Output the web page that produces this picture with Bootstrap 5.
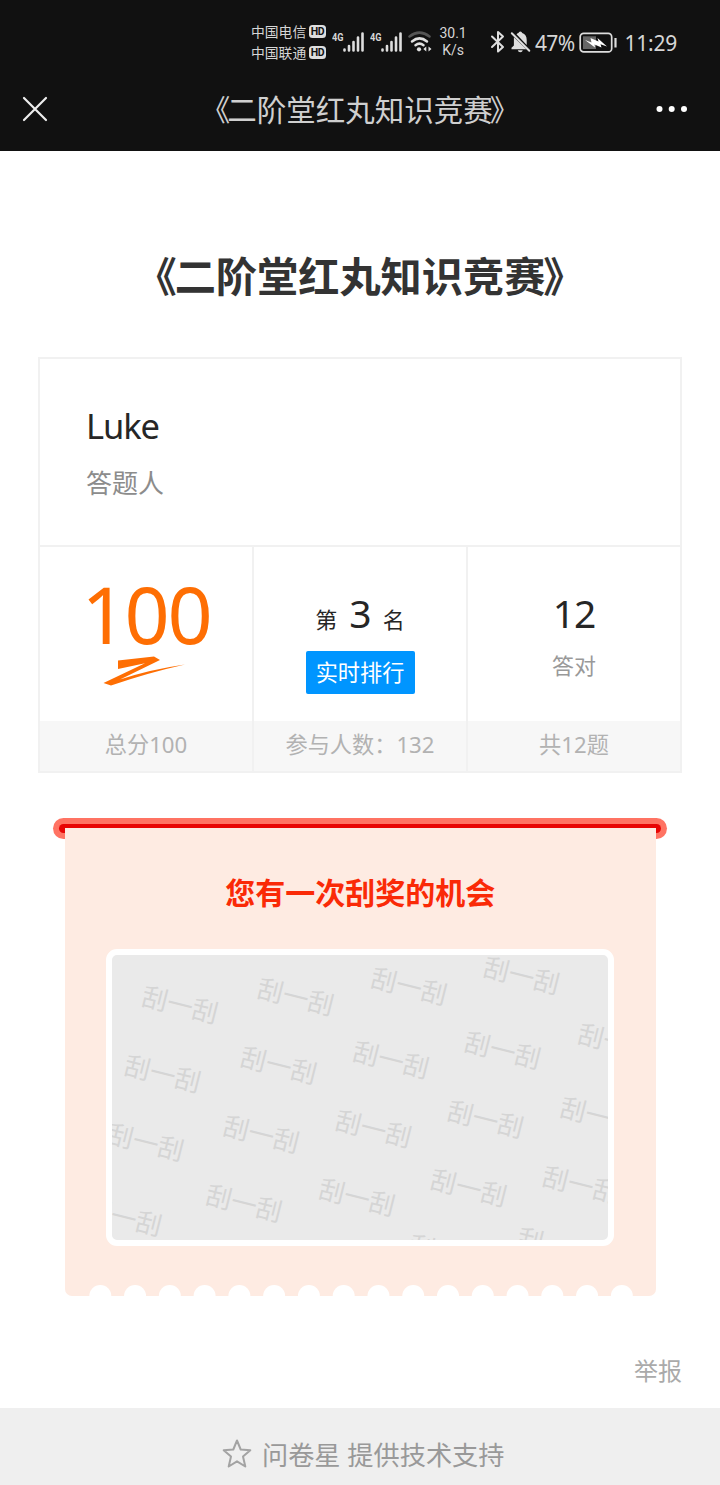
<!DOCTYPE html>
<html lang="zh-CN">
<head>
<meta charset="utf-8">
<meta name="viewport" content="width=device-width, initial-scale=1">
<title>《二阶堂红丸知识竞赛》</title>
<link href="https://cdn.jsdelivr.net/npm/bootstrap@5.3.0/dist/css/bootstrap.min.css" rel="stylesheet">
<style>
body { font-family: "Noto Sans", "Noto Sans CJK SC", sans-serif; color: #262626; min-height: 1485px; background: #fff; overflow-x: hidden; }
.topbar { background: #111; height: 150.5px; color: #d6d6d6; }
.status { height: 68px; padding: 0 43px 0 251px; }
.status svg, .nav-row svg { display: block; flex: none; }
.carrier { width: 76px; font-size: 13.8px; line-height: 21px; margin-top: 21px; }
.hd { width: 17.5px; height: 12.500px; border-radius: 3.5px; background: #dedede; color: #111; font: 700 10.5px/13px Roboto, sans-serif; text-align: center; letter-spacing: -.3px; }
.sig { margin: 28px 0 0 6px; }
.rate { width: 32px; margin: 25px 0 0 3px; font: 14px/17px Roboto, sans-serif; text-align: center; }
.pct { width: 40px; font-size: 21px; line-height: 28px; margin: 29px 0 0 4px; letter-spacing: -.6px; }
.clock { font-size: 21px; line-height: 28px; margin: 29px 0 0 7px; letter-spacing: -.25px; }
.nav-row { height: 82px; padding: 0 32px 0 21px; }
.nav-title { font-size: 29.5px; line-height: 40px; margin: 2px 0 0 15px; color: #cfcfcf; white-space: nowrap; }
.nav-title span { margin: 0 -3px; }
.quiz-title { font-size: 41.2px; line-height: 60px; font-weight: 700; color: #333; margin: 95.5px 0 51px; white-space: nowrap; }
.quiz-title span { margin: 0 -2px; }
.result { margin: 0 38px; border: 2px solid #f1f1f1; height: 416px; }
.person { height: 188px; padding: 45px 46px 0 46px; border-bottom: 2px solid #f1f1f1; }
.person-name { font-size: 34.5px; line-height: 44px; letter-spacing: -1.1px; }
.person-role { font-size: 26px; line-height: 36px; margin-top: 16.5px; color: #8c8c8c; }
.score-col { height: 224px; }
.score-col + .score-col { border-left: 2px solid #f1f1f1; }
.score-main { height: 174px; }
.score-foot { height: 50px; background: #f7f7f7; color: #b2b2b2; font-size: 22.2px; line-height: 47px; white-space: nowrap; }
.total { font-size: 79px; line-height: 90px; color: #fe6e03; letter-spacing: -2.2px; margin-top: 22px; }
.rank { font-size: 22px; line-height: 52px; margin-top: 39.5px; }
.big-num { font-size: 39px; line-height: 52px; letter-spacing: -1px; }
.rank-btn { --bs-btn-border-radius: 2px; background: #0095ff; color: #fff; font-size: 22.2px; width: 109px; height: 43px; padding: 0; line-height: 41px; border: 0; margin-top: 6px; }
.rank-btn:hover { background: #0085e6; color: #fff; }
.muted { color: #999; font-size: 22px; line-height: 32px; }
.prize { margin: 45px 53px 0; height: 479px; }
.slot { height: 20.5px; border-radius: 10.5px; background: #ff7363; padding: 6px; }
.slot > div { height: 8.5px; background: #e80504; border-radius: 4.5px; }
.ticket { width: 590.5px; height: 468.5px; margin: -11px 0 0 12px; background: #feebe2; border-radius: 0 0 7px 7px; position: relative; overflow: hidden; }
.ticket-title { font-size: 30px; line-height: 44px; font-weight: 700; color: #fa2a07; padding-top: 43px; }
.scratch { width: 508px; height: 297px; margin: 34px 0 0 41px; border: 6px solid #fff; border-radius: 11px; background: #eaeaea; overflow: hidden; }
.scratch text { font: 25.8px "Noto Sans CJK SC", sans-serif; fill: #d5d5d5; text-anchor: middle; }
.teeth { position: absolute; left: 0; bottom: 0; }
.report { color: #aaa; font-size: 24px; line-height: 36px; padding-right: 38px; margin-top: 56px; }
.foot { background: #efefef; height: 77px; margin-top: 19px; color: #999; font-size: 26.2px; line-height: 36px; padding: 29px 0 0 222px; }
.foot span { margin-left: 10px; white-space: nowrap; }
</style>
</head>
<body class="d-flex flex-column">
<header class="topbar">
  <div class="status d-flex align-items-start text-nowrap">
    <div class="carrier">
      <div class="d-flex align-items-center justify-content-between"><span>中国电信</span><span class="hd">HD</span></div>
      <div class="d-flex align-items-center justify-content-between"><span>中国联通</span><span class="hd">HD</span></div>
    </div>
    <svg class="sig" width="32" height="26" viewBox="0 0 32 26"><text x="0" y="13" font-family="Roboto" font-weight="700" font-size="11.5" textLength="11.5" lengthAdjust="spacingAndGlyphs" fill="#d6d6d6">4G</text><g stroke="#dedede" stroke-width="2.6" stroke-linecap="round"><path d="M12.5 21.5v1M17 18v4.5M21.5 14v8.500M26 9.500v13M30.500 5.500v17"/></g></svg>
    <svg class="sig" width="32" height="26" viewBox="0 0 32 26"><text x="0" y="13" font-family="Roboto" font-weight="700" font-size="11.5" textLength="11.5" lengthAdjust="spacingAndGlyphs" fill="#d6d6d6">4G</text><g stroke="#dedede" stroke-width="2.6" stroke-linecap="round"><path d="M12.5 21.5v1M17 18v4.5M21.5 14v8.500M26 9.500v13M30.500 5.500v17"/></g></svg>
    <svg class="sig" width="26" height="26" viewBox="0 0 26 26"><g fill="none" stroke="#e0e0e0" stroke-width="2.500" stroke-linecap="round"><path d="M1.500 8.500Q11.500 .8 21.500 8.500" stroke="#555"/><path d="M4 13.500Q11.500 7.300 19 13.500M7.500 17.300Q11.500 14 15.500 17.300"/></g><circle cx="11" cy="21.300" r="2.100" fill="#e0e0e0"/><path d="M18.300 18.500v5l-3-2.500zM20.500 18.500v5l3-2.500z" fill="#e0e0e0"/></svg>
    <div class="rate">30.1<br>K/s</div>
    <svg width="16" height="24" viewBox="0 0 16 24" style="margin:30px 0 0 21px"><path d="M2 6.500 13 17 8 21.500V2l5 4.500L2 17" fill="none" stroke="#dedede" stroke-width="2" stroke-linejoin="round" stroke-linecap="round"/></svg>
    <svg width="21" height="24" viewBox="0 0 21 24" style="margin:30px 0 0 4px"><path d="M6.500 4.300Q7.800 3.200 8.500 3.100 8.700 1.500 10.300 1.500T12.200 3.100Q16.700 4.500 16.700 10V15zM3.900 7.300 16.400 19.300H1.500v-1.500L3.900 15.500zM7.800 20.300h5q-.4 2-2.500 2t-2.500-2z" fill="#dedede"/><path d="M1.800 3.300 19.300 20.700" stroke="#dedede" stroke-width="2" stroke-linecap="round"/></svg>
    <div class="pct">47%</div>
    <svg width="39" height="22" viewBox="0 0 39 22" style="margin:32px 0 0 4px"><rect x="1.200" y="1.400" width="31.500" height="18.500" rx="3.500" fill="none" stroke="#dedede" stroke-width="1.700"/><rect x="4" y="4.300" width="13" height="12.700" fill="#666"/><path d="M6 8 12.500 10.500 11.500 6 19.500 9.500 18.500 6 28 14.500 21.500 12.300 22.500 15.500 15.500 12.500 16 15.500z" fill="#fff"/><path d="M36.500 6v9.500" stroke="#dedede" stroke-width="2.200"/></svg>
    <div class="clock">11:29</div>
  </div>
  <nav class="nav-row d-flex align-items-center justify-content-between">
    <svg width="28" height="28" viewBox="0 0 28 28"><path d="m3 3 22 22M25 3 3 25" stroke="#eee" stroke-width="2.200" stroke-linecap="round"/></svg>
    <div class="nav-title"><span>《</span>二阶堂红丸知识竞赛<span>》</span></div>
    <svg width="32" height="8" viewBox="0 0 32 8" fill="#fff"><circle cx="3.500" cy="4" r="3"/><circle cx="15.700" cy="4" r="3"/><circle cx="28" cy="4" r="3"/></svg>
  </nav>
</header>
<main>
  <h1 class="quiz-title text-center"><span>《</span>二阶堂红丸知识竞赛<span>》</span></h1>
  <section class="result">
    <div class="person">
      <div class="person-name">Luke</div>
      <div class="person-role">答题人</div>
    </div>
    <div class="row g-0 text-center">
      <div class="col score-col">
        <div class="score-main d-flex flex-column align-items-center">
          <div class="total">100</div>
          <svg width="84" height="32" viewBox="0 0 84 32" style="margin:-4px 4px 0 0"><path d="M16 5.500V14L43 8.300 1.500 28 9 30.500Q47 17.500 83 9.500 48 14.500 18 24.500L58 5 52 1.500z" fill="#fe6e03"/></svg>
        </div>
        <div class="score-foot">总分100</div>
      </div>
      <div class="col score-col">
        <div class="score-main d-flex flex-column align-items-center">
          <div class="rank d-flex align-items-baseline"><span>第</span><span class="big-num mx-2 px-1">3</span><span>名</span></div>
          <button type="button" class="btn rank-btn">实时排行</button>
        </div>
        <div class="score-foot">参与人数：132</div>
      </div>
      <div class="col score-col">
        <div class="score-main d-flex flex-column align-items-center">
          <div class="big-num" style="margin-top:40px">12</div>
          <div class="muted" style="margin-top:10px">答对</div>
        </div>
        <div class="score-foot">共12题</div>
      </div>
    </div>
  </section>
  <section class="prize">
    <div class="slot"><div></div></div>
    <div class="ticket">
      <div class="ticket-title text-center">您有一次刮奖的机会</div>
      <div class="scratch">
        <svg id="coating" class="d-block" width="496" height="285" viewBox="112 955 496 285"></svg>
      </div>
      <svg id="teeth" class="teeth" width="591" height="12" viewBox="65 1284 591 12" fill="#fff"></svg>
    </div>
  </section>
  <div class="report text-end">举报</div>
</main>
<footer class="foot d-flex align-items-start">
  <svg width="30" height="31" viewBox="0 0 30 31" style="margin-top:1px"><path d="M15 2.500 18.700 11.500 28.300 12.200 21 18.500 23.300 28.500 15 23.300 6.700 28.500 9 18.500 1.700 12.200 11.300 11.500z" fill="none" stroke="#a3a3a3" stroke-width="2" stroke-linejoin="round"/></svg>
  <span>问卷星 提供技术支持</span>
</footer>
<script src="https://cdn.jsdelivr.net/npm/bootstrap@5.3.0/dist/js/bootstrap.bundle.min.js"></script>
<script>
// Centres of the repeated labels printed on the scratch coating
const labels = [[180,1005],[295.7,997],[409,986.5],[521.5,975.7],
  [162.7,1074],[278.7,1065.5],[391,1060],[502.7,1050.5],[616,1042.5],
  [145.7,1142.5],[261.3,1134.3],[373.5,1129],[485.5,1119.3],[598.3,1116],
  [123.7,1217.5],[244,1203.3],[357,1197.3],[468.7,1188],[580.7,1185],
  [447,1253.5],[555.5,1246.5]];
document.getElementById('coating').innerHTML = labels.map(([x, y]) =>
  `<text transform="translate(${x} ${y}) rotate(14)" y="9.5">刮一刮</text>`).join('');
// Perforations along the ticket's lower edge
document.getElementById('teeth').innerHTML = Array.from({length: 16}, (_, i) =>
  `<circle cx="${100.3 + i * 34.77}" cy="1296" r="11"/>`).join('');
</script>
</body>
</html>
